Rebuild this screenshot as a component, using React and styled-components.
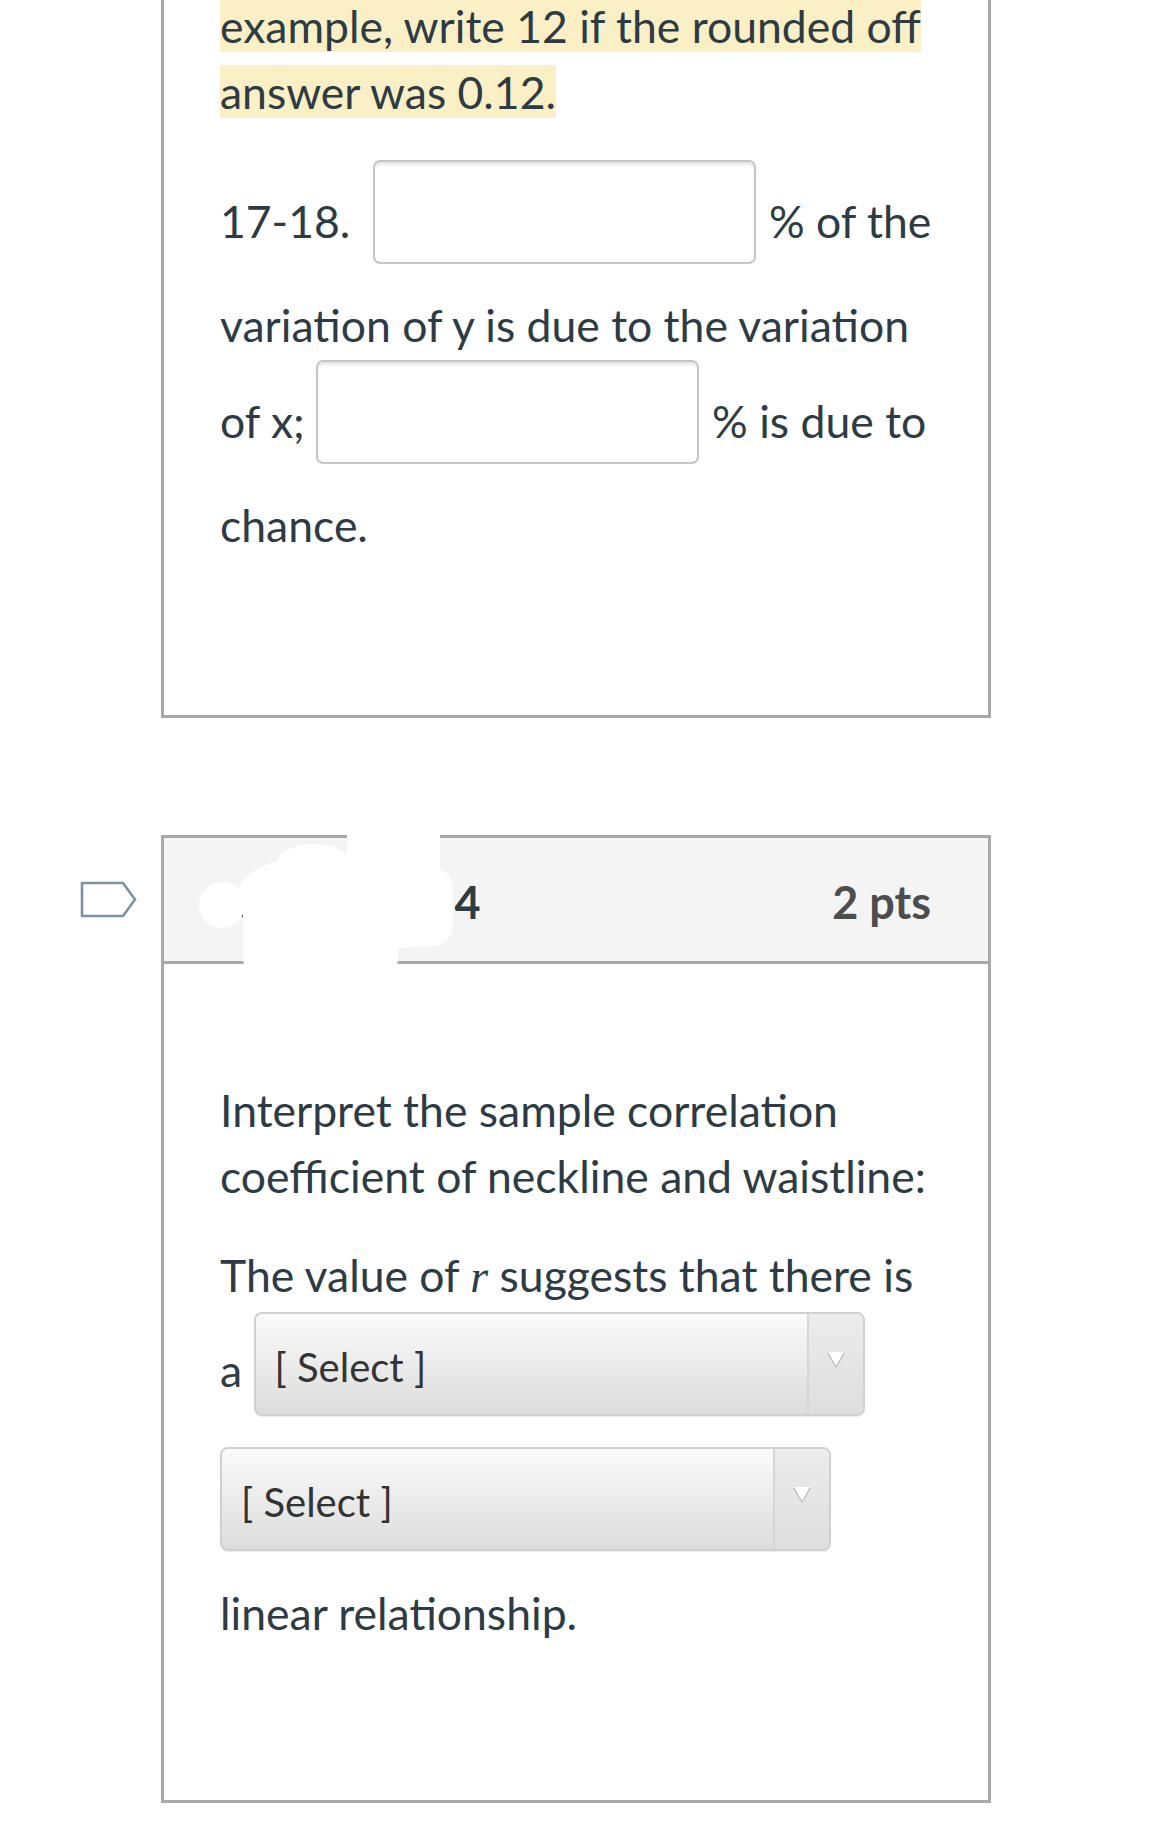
import styled, { createGlobalStyle } from 'styled-components'

const GlobalStyle = createGlobalStyle`
    body {
        margin: 0;
        background: #fff;
        font-family: Lato, "Open Sans", sans-serif;
        color: #2d3b45;
    }
`

const Page = styled.div`
    width: 1151px;
    overflow: hidden;
`

const QuestionRow = styled.div`
    display: flex;
    align-items: flex-start;
    margin-top: ${p => p.$gap}px;
`

const Gutter = styled.div`
    width: 161px;
    flex: none;
    box-sizing: border-box;
    padding: 46px 0 0 80px;
`

const Card = styled.div`
    width: 830px;
    flex: none;
    box-sizing: border-box;
    border: 3px solid #a9a9a9;
    ${p => p.$cut && 'border-top: none;'}
    background: #fff;
`

const Header = styled.div`
    position: relative;
    height: 126px;
    display: flex;
    align-items: center;
    justify-content: space-between;
    padding: 4px 57px 0 68px;
    box-sizing: border-box;
    background: #f4f4f4;
    border-bottom: 3px solid #a9a9a9;
    font-size: 45px;
    font-weight: 700;
`

const Title = styled.span`
    color: #2d3b45;
`

const Points = styled.span`
    color: #4d4d4d;
`

const Redaction = styled.svg`
    position: absolute;
    left: 0;
    top: 0;
    overflow: visible;
`

const Body = styled.div`
    padding: ${p => p.$top}px 50px ${p => p.$bottom}px 56px;
`

const Para = styled.p`
    margin: 0 0 33px;
    font-size: 44.5px;
    line-height: 66px;
`

const Mark = styled.span`
    background: #fbf0c5;
`

const Var = styled.span`
    font-family: "Liberation Serif", serif;
    font-style: italic;
    font-size: 46px;
`

const Blank = styled.span`
    display: inline-block;
    width: 383px;
    height: 104px;
    box-sizing: border-box;
    margin: 2px 2px 28px 11px;
    vertical-align: -54px;
    border: 2px solid #c6c6c6;
    border-radius: 7px;
    background: #fff;
    box-shadow: inset 0 4px 4px -2px rgba(0, 0, 0, 0.14);
`

const Select = styled.span`
    display: inline-block;
    width: 611px;
    height: 104px;
    box-sizing: border-box;
    margin: 2px 0 29px 0;
    vertical-align: -58px;
    overflow: hidden;
    border: 2px solid #d0d0d0;
    border-radius: 8px;
    background: linear-gradient(#fbfbfb, #dcdcdc);
    box-shadow: 0 1px 1px rgba(0, 0, 0, 0.08);
`

const SelectInner = styled.span`
    display: flex;
    align-items: center;
    height: 100%;
`

const SelectText = styled.span`
    flex: 1;
    padding: 6px 0 0 19px;
    font-size: 40px;
    line-height: 1;
    color: #333;
`

const Arrow = styled.span`
    width: 56px;
    align-self: stretch;
    display: flex;
    align-items: center;
    justify-content: center;
    padding-bottom: 8px;
    box-sizing: border-box;
    border-left: 2px solid #d6d6d6;
    background: linear-gradient(#ececec, #dedede);
`

const FlagIcon = () => (
    <svg width="58" height="38" viewBox="0 0 58 38">
        <path d="M2 2 H43 L55 18.5 L43 35 H2 Z" fill="none" stroke="#7b93a7" strokeWidth="2.6" strokeLinejoin="miter" />
    </svg>
)

const Caret = () => (
    <svg width="20" height="18" viewBox="0 0 20 18">
        <path d="M1 2 H19 L10 17 Z" fill="#b8b8b8" />
        <path d="M2 1 H18 L10 15 Z" fill="#fff" />
    </svg>
)

const Dropdown = () => (
    <Select>
        <SelectInner>
            <SelectText>[ Select ]</SelectText>
            <Arrow><Caret /></Arrow>
        </SelectInner>
    </Select>
)

const App = () => {
    return (
        <Page>
            <GlobalStyle />
            <QuestionRow $gap={-7}>
                <Gutter />
                <Card $cut>
                    <Body $top={0} $bottom={124}>
                        <Para>
                            <Mark>example, write 12 if the rounded off answer was 0.12.</Mark>
                        </Para>
                        <Para>
                            17-18. <Blank /> % of the variation of y is due to the variation of x;<Blank /> % is due to chance.
                        </Para>
                    </Body>
                </Card>
            </QuestionRow>

            <QuestionRow $gap={117}>
                <Gutter>
                    <FlagIcon />
                </Gutter>
                <Card>
                    <Header>
                        <Title>Question 14</Title>
                        <Points>2 pts</Points>
                        {/* white scribble over the question name */}
                        <Redaction width="824" height="126">
                            <g fill="#fff">
                                <rect x="183" y="-9" width="93" height="56" rx="6" />
                                <circle cx="58" cy="67" r="23" />
                                <ellipse cx="136" cy="57" rx="62" ry="36" />
                                <ellipse cx="150" cy="26" rx="38" ry="20" />
                                <ellipse cx="236" cy="67" rx="53" ry="43" />
                                <rect x="236" y="30" width="53" height="78" rx="20" />
                                <rect x="79" y="50" width="155" height="80" rx="8" />
                            </g>
                        </Redaction>
                    </Header>
                    <Body $top={113} $bottom={121}>
                        <Para>Interpret the sample correlation coefficient of neckline and waistline:</Para>
                        <Para>
                            The value of <Var>r</Var> suggests that there is a <Dropdown /> <Dropdown /> linear relationship.
                        </Para>
                    </Body>
                </Card>
            </QuestionRow>
        </Page>
    )
}

export default App
